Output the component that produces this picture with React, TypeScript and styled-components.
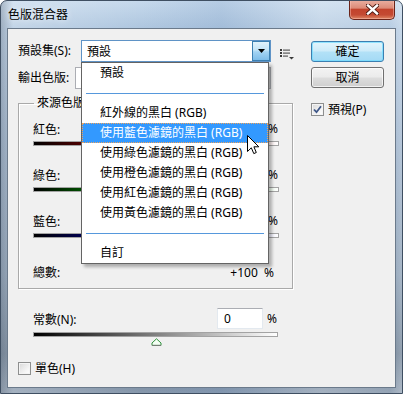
import React from "react";
import styled, { createGlobalStyle } from "styled-components";

const Global = createGlobalStyle`
  html, body { margin: 0; padding: 0; background: #ffffff; }
  body {
    font-family: "Noto Sans", "Noto Sans CJK TC", sans-serif;
    font-size: 12px;
    color: #000;
  }
  * { box-sizing: border-box; }
`;

const Window = styled.div`
  width: 403px;
  height: 394px;
  display: flex;
  flex-direction: column;
  border: 1px solid #3f4f62;
  border-radius: 7px 7px 0 0;
  padding: 0 6px 5px 6px;
  background:
    linear-gradient(to right, rgba(40,55,75,0.25) 0%, rgba(255,255,255,0) 3%, rgba(255,255,255,0) 97%, rgba(255,255,255,0.25) 100%),
    linear-gradient(to right, rgba(255,255,255,0.28) 0%, rgba(255,255,255,0) 35%, rgba(110,145,190,0.18) 55%, rgba(255,255,255,0.25) 80%, rgba(255,255,255,0.1) 100%),
    linear-gradient(to bottom, #c6d9ec 0%, #aec6df 7%, #95adc8 35%, #7f95ad 70%, #62768c 90%, #8798ac 100%);
  overflow: hidden;
`;

const TitleBar = styled.div`
  height: 27px;
  display: flex;
  align-items: flex-start;
  padding-left: 1px;
`;

const Title = styled.div`
  margin-top: 6px;
  line-height: 16px;
  font-size: 12px;
  color: #000;
  text-shadow: 0 0 6px rgba(255,255,255,0.9);
`;

const CloseButton = styled.div`
  margin-left: auto;
  margin-right: 1px;
  margin-top: -1px;
  width: 46px;
  height: 20px;
  border: 1px solid #6a2419;
  border-top: none;
  border-radius: 0 0 5px 5px;
  background: linear-gradient(to bottom, #eab0a2 0%, #dc8b78 42%, #c2432c 50%, #c44a33 78%, #de8664 100%);
  box-shadow: inset 0 0 0 1px rgba(255,200,190,0.45);
  display: flex;
  align-items: center;
  justify-content: center;
`;

const Client = styled.div`
  flex: 1;
  border: 1px solid #6b7a8b;
  background: #f0f0f0;
  display: flex;
  align-items: flex-start;
`;

const LeftCol = styled.div`
  width: 296px;
  padding: 11px 0 0 10px;
  display: flex;
  flex-direction: column;
`;

const RightCol = styled.div`
  width: 73px;
  margin-left: 7px;
  padding-top: 12px;
  display: flex;
  flex-direction: column;
`;

const FormRow = styled.div<{ $top?: number }>`
  display: flex;
  align-items: center;
  height: 22px;
  margin-top: ${(p) => p.$top ?? 0}px;
`;

const Label = styled.div<{ $w: number }>`
  width: ${(p) => p.$w}px;
  flex: none;
  line-height: 16px;
  white-space: nowrap;
`;

const SelectBox = styled.div<{ $w: number; $open?: boolean }>`
  position: relative;
  width: ${(p) => p.$w}px;
  height: 22px;
  flex: none;
  background: #fff;
  border: 1px solid ${(p) => (p.$open ? "#5f93c6" : "#abadb3")};
  display: flex;
  align-items: center;
  padding-left: 5px;
`;

const SelectArrow = styled.div<{ $open?: boolean }>`
  margin-left: auto;
  width: 18px;
  height: 100%;
  border: 1px solid ${(p) => (p.$open ? "#3c7fb1" : "#c9c9c9")};
  background: ${(p) =>
    p.$open
      ? "linear-gradient(to bottom, #e1f2fc 0%, #c3e4f8 45%, #a2d3f3 55%, #7ebde9 100%)"
      : "linear-gradient(to bottom, #f2f2f2, #dcdcdc)"};
  display: flex;
  align-items: center;
  justify-content: center;
`;

const ListIconWrap = styled.div`
  margin-left: 9px;
  margin-top: 6px;
  display: flex;
`;

const Dropdown = styled.div`
  position: absolute;
  top: 21px;
  left: -1px;
  width: 188px;
  background: #fff;
  border: 1px solid #646464;
  box-shadow: 3px 3px 3px rgba(0, 0, 0, 0.28);
  z-index: 10;
  display: flex;
  flex-direction: column;
`;

const Item = styled.div<{ $active?: boolean }>`
  height: 20px;
  line-height: 18px;
  padding-left: 17px;
  white-space: nowrap;
  border: 1px ${(p) => (p.$active ? "dotted #f0a45c" : "solid transparent")};
  background: ${(p) => (p.$active ? "#3399ff" : "transparent")};
  color: ${(p) => (p.$active ? "#fff" : "#000")};
`;

const SepBlock = styled.div`
  height: 20px;
  display: flex;
  align-items: center;
  padding: 0 4px;
`;

const SepLine = styled.div`
  flex: 1;
  height: 1px;
  background: #5698dc;
`;

const Cursor = styled.svg`
  position: absolute;
  left: 165px;
  top: 72px;
`;

const GroupBox = styled.fieldset`
  margin: 6px 0 0 0;
  width: 275px;
  border: 1px solid #a9a9a9;
  box-shadow: inset 1px 1px 0 #fff, 1px 1px 0 #fff;
  padding: 7px 13px 6px 14px;
  min-inline-size: 0;
`;

const Legend = styled.legend`
  padding: 0 3px;
  margin-left: 1px;
  line-height: 16px;
`;

const Channel = styled.div<{ $first?: boolean }>`
  margin-top: ${(p) => (p.$first ? 0 : 18)}px;
  display: flex;
  flex-direction: column;
`;

const ValueRow = styled.div`
  height: 21px;
  display: flex;
  align-items: center;
  justify-content: space-between;
`;

const ValueRight = styled.div`
  display: flex;
  align-items: center;
  gap: 4px;
`;

const NumberBox = styled.div`
  width: 46px;
  height: 21px;
  background: #fff;
  border: 1px solid #e3e9ef;
  border-top-color: #abadb3;
  padding-left: 6px;
  line-height: 19px;
`;

const Percent = styled.span`
  width: 11px;
  line-height: 16px;
`;

const Bar = styled.div<{ $color: string }>`
  margin-top: 2px;
  height: 5px;
  border: 1px solid #a3a3a3;
  background: linear-gradient(to right, #000 0%, ${(p) => p.$color} 50%, #fff 100%);
`;

const TotalRow = styled.div`
  margin-top: 24px;
  height: 20px;
  display: flex;
  align-items: center;
  justify-content: space-between;
  padding-right: 5px;
`;

const Constant = styled.div`
  margin: 19px 0 0 15px;
  width: 245px;
  display: flex;
  flex-direction: column;
`;

const TrackWrap = styled.div`
  position: relative;
  height: 14px;
  padding-top: 3px;
`;

const Track = styled.div`
  height: 5px;
  border: 1px solid #a3a3a3;
  background: linear-gradient(to right, #000 0%, #808080 50%, #fff 100%);
`;

const Thumb = styled.svg`
  position: absolute;
  top: 9px;
  left: 118px;
`;

const CheckRow = styled.label<{ $top: number }>`
  display: flex;
  align-items: center;
  gap: 4px;
  margin-top: ${(p) => p.$top}px;
  height: 13px;
  line-height: 16px;
`;

const CheckBox = styled.span`
  width: 13px;
  height: 13px;
  flex: none;
  border: 1px solid #8e8f8f;
  background: linear-gradient(135deg, #d8d8d8 0%, #f6f6f6 70%, #ffffff 100%);
  box-shadow: inset 0 0 0 1px #f4f4f4;
  display: flex;
  align-items: center;
  justify-content: center;
`;

const Button = styled.div<{ $default?: boolean; $top?: number }>`
  height: 21px;
  margin-top: ${(p) => p.$top ?? 0}px;
  border: 1px solid ${(p) => (p.$default ? "#3c7fb1" : "#707070")};
  border-radius: 3px;
  background: ${(p) =>
    p.$default
      ? "linear-gradient(to bottom, #e4f5fc 0%, #cdebf9 48%, #b3e1f7 52%, #a4daf5 100%)"
      : "linear-gradient(to bottom, #f3f3f3 0%, #ebebeb 48%, #dddddd 52%, #cfcfcf 100%)"};
  box-shadow: inset 0 0 0 1px ${(p) => (p.$default ? "rgba(110,220,255,0.7)" : "rgba(255,255,255,0.7)")};
  display: flex;
  align-items: center;
  justify-content: center;
  line-height: 16px;
`;

const CloseGlyph = () => (
  <svg width="13" height="11" viewBox="0 0 13 11">
    <path d="M2 1.5 L11 9.5 M11 1.5 L2 9.5" stroke="#4a1810" strokeWidth="4.2" strokeLinecap="square" />
    <path d="M2 1.5 L11 9.5 M11 1.5 L2 9.5" stroke="#ffffff" strokeWidth="2.4" strokeLinecap="square" />
  </svg>
);

const DownTri = () => (
  <svg width="7" height="4" viewBox="0 0 7 4">
    <path d="M0 0 H7 L3.5 4 Z" fill="#000" />
  </svg>
);

const ListIcon = () => (
  <svg width="15" height="11" viewBox="0 0 15 11">
    <rect x="0" y="0" width="2" height="2" fill="#3a3a3a" />
    <rect x="3" y="0.5" width="7" height="1.2" fill="#5a5a5a" />
    <rect x="0" y="3" width="2" height="2" fill="#3a3a3a" />
    <rect x="3" y="3.5" width="7" height="1.2" fill="#5a5a5a" />
    <rect x="0" y="6" width="2" height="2" fill="#3a3a3a" />
    <rect x="3" y="6.5" width="5" height="1.2" fill="#5a5a5a" />
    <path d="M9 8 H14 L11.5 10.5 Z" fill="#3a3a3a" />
  </svg>
);

const CheckMark = () => (
  <svg width="9" height="9" viewBox="0 0 9 9">
    <path d="M1 4.5 L3.5 7.2 L8 1.2" stroke="#3e5788" strokeWidth="1.8" fill="none" />
  </svg>
);

const presetItems = [
  "紅外線的黑白 (RGB)",
  "使用藍色濾鏡的黑白 (RGB)",
  "使用綠色濾鏡的黑白 (RGB)",
  "使用橙色濾鏡的黑白 (RGB)",
  "使用紅色濾鏡的黑白 (RGB)",
  "使用黃色濾鏡的黑白 (RGB)",
];

const channels = [
  { name: "紅色:", color: "#c80000" },
  { name: "綠色:", color: "#00c800" },
  { name: "藍色:", color: "#0000c8" },
];

export default function App() {
  return (
    <>
      <Global />
      <Window>
        <TitleBar>
          <Title>色版混合器</Title>
          <CloseButton>
            <CloseGlyph />
          </CloseButton>
        </TitleBar>
        <Client>
          <LeftCol>
            <FormRow>
              <Label $w={63}>預設集(S):</Label>
              <SelectBox $w={190} $open>
                預設
                <SelectArrow $open>
                  <DownTri />
                </SelectArrow>
                <Dropdown>
                  <Item>預設</Item>
                  <SepBlock>
                    <SepLine />
                  </SepBlock>
                  {presetItems.map((t, i) => (
                    <Item key={t} $active={i === 1}>
                      {t}
                    </Item>
                  ))}
                  <SepBlock>
                    <SepLine />
                  </SepBlock>
                  <Item>自訂</Item>
                  <Cursor width="13" height="20" viewBox="0 0 13 20">
                    <path
                      d="M0.5 0.5 L0.5 16.5 L4.3 12.8 L6.8 18.6 L9.3 17.5 L6.9 11.8 L11.8 11.8 Z"
                      fill="#fff"
                      stroke="#000"
                      strokeWidth="1"
                    />
                  </Cursor>
                </Dropdown>
              </SelectBox>
              <ListIconWrap>
                <ListIcon />
              </ListIconWrap>
            </FormRow>
            <FormRow $top={5}>
              <Label $w={57}>輸出色版:</Label>
              <SelectBox $w={196}>
                <SelectArrow>
                  <DownTri />
                </SelectArrow>
              </SelectBox>
            </FormRow>
            <GroupBox>
              <Legend>來源色版</Legend>
              {channels.map((c, i) => (
                <Channel key={c.name} $first={i === 0}>
                  <ValueRow>
                    <span>{c.name}</span>
                    <ValueRight>
                      <NumberBox />
                      <Percent>%</Percent>
                    </ValueRight>
                  </ValueRow>
                  <Bar $color={c.color} />
                </Channel>
              ))}
              <TotalRow>
                <span>總數:</span>
                <span>+100&nbsp;&nbsp;%</span>
              </TotalRow>
            </GroupBox>
            <Constant>
              <ValueRow>
                <span>常數(N):</span>
                <ValueRight>
                  <NumberBox>0</NumberBox>
                  <Percent>%</Percent>
                </ValueRight>
              </ValueRow>
              <TrackWrap>
                <Track />
                <Thumb width="11" height="8" viewBox="0 0 11 8">
                  <path d="M5.5 0.8 L10 5 L10 7.4 L1 7.4 L1 5 Z" fill="#f4fff4" stroke="#2f8f3a" strokeWidth="1" />
                  <path d="M1 7.4 H10" stroke="#7a7a7a" strokeWidth="1" />
                </Thumb>
              </TrackWrap>
            </Constant>
            <CheckRow $top={19}>
              <CheckBox />
              單色(H)
            </CheckRow>
          </LeftCol>
          <RightCol>
            <Button $default>確定</Button>
            <Button $top={5}>取消</Button>
            <CheckRow $top={15}>
              <CheckBox>
                <CheckMark />
              </CheckBox>
              預視(P)
            </CheckRow>
          </RightCol>
        </Client>
      </Window>
    </>
  );
}
